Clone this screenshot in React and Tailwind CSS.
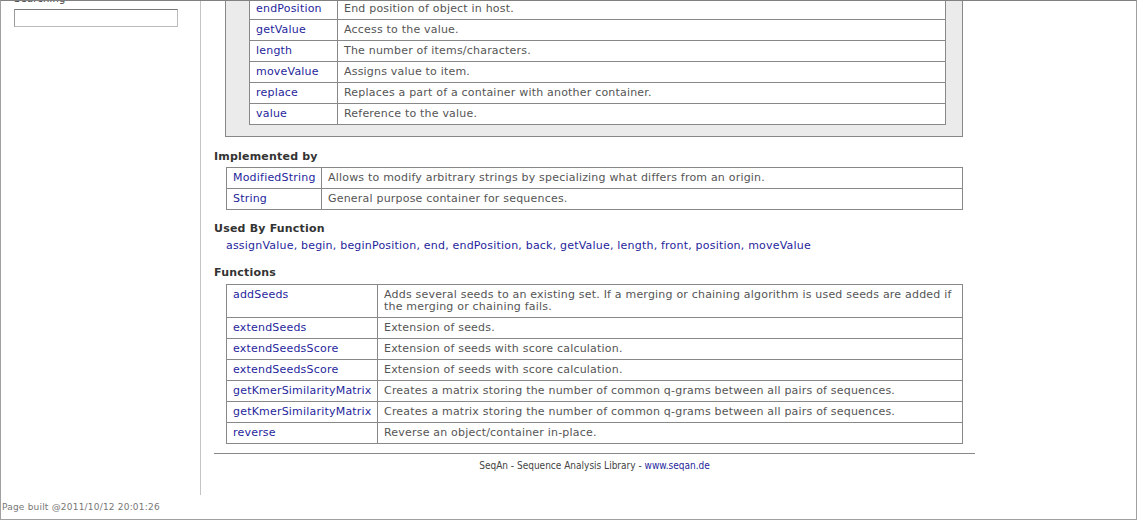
const members = [
  ["endPosition", "End position of object in host."],
  ["getValue", "Access to the value."],
  ["length", "The number of items/characters."],
  ["moveValue", "Assigns value to item."],
  ["replace", "Replaces a part of a container with another container."],
  ["value", "Reference to the value."],
];

const implementedBy = [
  ["ModifiedString", "Allows to modify arbitrary strings by specializing what differs from an origin."],
  ["String", "General purpose container for sequences."],
];

const usedBy = [
  "assignValue", "begin", "beginPosition", "end", "endPosition", "back",
  "getValue", "length", "front", "position", "moveValue",
];

const functions = [
  ["addSeeds", "Adds several seeds to an existing set. If a merging or chaining algorithm is used seeds are added if the merging or chaining fails."],
  ["extendSeeds", "Extension of seeds."],
  ["extendSeedsScore", "Extension of seeds with score calculation."],
  ["extendSeedsScore", "Extension of seeds with score calculation."],
  ["getKmerSimilarityMatrix", "Creates a matrix storing the number of common q-grams between all pairs of sequences."],
  ["getKmerSimilarityMatrix", "Creates a matrix storing the number of common q-grams between all pairs of sequences."],
  ["reverse", "Reverse an object/container in-place."],
];

function DocTable({ rows, firstCol, className = "" }) {
  return (
    <table className={`border-collapse border border-[#888] w-full table-fixed ${className}`}>
      <colgroup>
        <col className={firstCol} />
        <col />
      </colgroup>
      <tbody>
        {rows.map(([name, desc], i) => (
          <tr key={i}>
            <td className="border border-[#888] px-[6px] py-[4px] leading-[12px] align-top text-[#1f1f9c]">
              {name}
            </td>
            <td className="border border-[#888] px-[6px] py-[4px] leading-[12px] align-top text-[#555]">
              {desc}
            </td>
          </tr>
        ))}
      </tbody>
    </table>
  );
}

export default function App() {
  return (
    <div className="w-[1137px] h-[520px] overflow-hidden bg-white border border-[#a0a0a0] border-t-[#808080] flex flex-col font-['DejaVu_Sans',Verdana,sans-serif] text-[11px] tracking-[0.2px]">
      <div className="flex h-[494px] shrink-0">
        {/* sidebar */}
        <div className="w-[200px] shrink-0 border-r border-[#c4c4c4] pl-[13px]">
          <div className="-mt-[9px] leading-[14px] text-[#444] text-[10px]">Searching</div>
          <input
            type="text"
            className="mt-[3px] w-[164px] h-[18px] border border-[#bbb] border-t-[#777] border-l-[#999] bg-white"
          />
        </div>

        {/* main */}
        <div className="w-[774px] shrink-0 pl-[13px] flex flex-col">
          <div className="-mt-[4px] ml-[11px] mr-[12px] bg-[#ebebeb] border border-[#888] pl-[23px] pr-[16px] pb-[11px]">
            <DocTable rows={members} firstCol="w-[88px]" className="bg-white" />
          </div>

          <h3 className="mt-[12px] font-bold text-[#333] leading-[16px]">Implemented by</h3>
          <div className="mt-[2px] ml-[12px] mr-[12px]">
            <DocTable rows={implementedBy} firstCol="w-[95px]" />
          </div>

          <h3 className="mt-[11px] font-bold text-[#333] leading-[16px]">Used By Function</h3>
          <div className="mt-[1px] ml-[12px] leading-[16px] text-[#1f1f9c]">
            {usedBy.map((f, i) => (
              <span key={i}>
                {f}
                {i < usedBy.length - 1 ? ", " : ""}
              </span>
            ))}
          </div>

          <h3 className="mt-[11px] font-bold text-[#333] leading-[16px]">Functions</h3>
          <div className="mt-[3px] ml-[12px] mr-[12px]">
            <DocTable rows={functions} firstCol="w-[151px]" />
          </div>

          <div className="mt-[9px] border-t border-[#888]" />
          <div className="mt-[6px] text-center text-[10px] leading-[12px] tracking-normal text-[#444] font-['DejaVu_Sans_Condensed','Liberation_Sans',sans-serif]">
            SeqAn - Sequence Analysis Library - <span className="text-[#1f1f9c]">www.seqan.de</span>
          </div>
        </div>
      </div>

      <div className="mt-[6px] pl-[1px] leading-[12px] text-[9px] text-[#777]">Page built @2011/10/12 20:01:26</div>
    </div>
  );
}
